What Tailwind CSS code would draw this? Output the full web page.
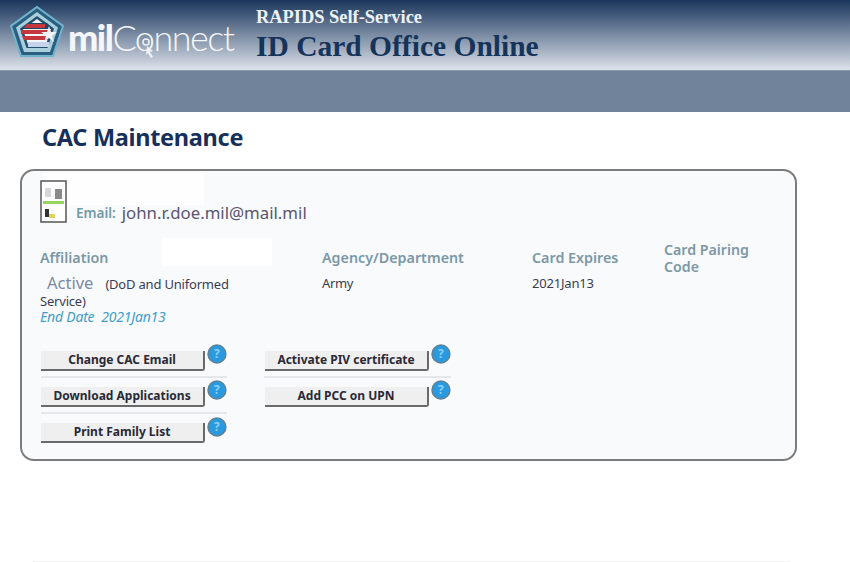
<!DOCTYPE html>
<html>
<head>
<meta charset="utf-8">
<script src="https://cdn.jsdelivr.net/npm/@tailwindcss/browser@4"></script>
</head>
<body class="bg-white font-['Noto_Sans',sans-serif] w-[850px] h-[562px] overflow-hidden relative">

<!-- banner -->
<header class="h-[70px] bg-gradient-to-b from-[#1b375c] via-[#7b8ca3] to-[#dde3ea] flex items-start">
  <svg class="w-[56px] h-[54px] ml-[9px] mt-[5px] shrink-0" viewBox="0 0 56 54">
    <polygon points="28,2 54,21 44,51 12,51 2,21" fill="#2b5f80" stroke="#6fb4cc" stroke-width="2"/>
    <polygon points="28,7 49,22.500 41,47 15,47 7,22.500" fill="#a9cfdd"/>
    <polygon points="28,11 45,23.500 38.500,43 17.500,43 11,23.500" fill="#24506f"/>
    <polygon points="28,14 42,24.500 36.500,41 19.500,41 14,24.500" fill="#f2f5fa"/>
    <path d="M20 18h18l5 6H13z" fill="#1f4565"/>
    <path d="M12 25h30v4H12z" fill="#c4373c"/>
    <path d="M18 19h18v4H15z" fill="#c4373c"/>
    <path d="M13 31h26v4H15z" fill="#c4373c"/>
    <path d="M19 37h21v5H19z" fill="#c5d4ea"/>
    <polygon points="40,21 42,27 48,27 43,31 45,37 40,33 35,37 37,31 32,27 38,27" fill="#eef3f8"/>
  </svg>
  <div class="relative ml-[3px] mt-[15px] w-[168px] text-[36px] leading-[44px] tracking-[-1.500px] text-[#f4f6f9] font-['Lato',sans-serif] whitespace-nowrap">
    <span class="font-black">mil</span><span class="font-light">Connect</span>
    <svg class="absolute left-[71px] top-[17px] w-[16px] h-[27px]" viewBox="0 0 16 27">
      <circle cx="7" cy="10" r="3" fill="none" stroke="#eef2f6" stroke-width="1.500"/>
      <path d="M8 14l6 5-3 1 3 5-2 1-3-5-2 2z" fill="#eef2f6"/>
    </svg>
  </div>
  <div class="ml-[20px] mt-[8px] font-['Liberation_Serif',serif] font-bold">
    <div class="text-[18.400px] leading-[19px] text-[#eef1f5]">RAPIDS Self-Service</div>
    <div class="mt-[2px] text-[29.500px] leading-[34px] text-[#16335a]">ID Card Office Online</div>
  </div>
</header>

<div class="h-[42px] bg-[#71839a] border-t border-[#8a98aa]"></div>

<main class="relative">
  <h1 class="ml-[42px] mt-[9px] text-[23.500px] leading-[33px] font-bold text-[#16305a] tracking-[-0.300px]">CAC Maintenance</h1>

  <section class="relative ml-[20px] mt-[15px] w-[777px] h-[292px] border-2 border-[#7c7c7c] rounded-[14px] bg-[#f9fafc] pl-[18px]">
    <!-- whited-out patches -->
    <div class="absolute left-[20px] top-[2px] w-[162px] h-[32px] bg-white/80"></div>
    <div class="absolute left-[140px] top-[67px] w-[110px] h-[28px] bg-white"></div>

    <div class="relative flex items-end h-[52px] pt-[9px]">
      <svg class="w-[27px] h-[43px] shrink-0" viewBox="0 0 27 43">
        <rect x="1" y="1" width="25" height="41" fill="#fff" stroke="#555" stroke-width="1.500"/>
        <rect x="5" y="8" width="6" height="9" fill="#d6d6dc"/>
        <rect x="15" y="9" width="7" height="10" fill="#8a8a8a"/>
        <rect x="3" y="21" width="21" height="3" fill="#9ad45c"/>
        <rect x="5" y="29" width="4" height="8" fill="#333"/>
        <rect x="9" y="34" width="6" height="4" fill="#e3d25a"/>
      </svg>
      <span class="ml-[9px] -translate-y-px text-[13.500px] leading-[18px] font-semibold text-[#6f9aa8]">Email:</span>
      <span class="ml-[6px] -translate-y-px text-[16.800px] leading-[18px] text-[#5a5570]">john.r.doe.mil@mail.mil</span>
    </div>

    <div class="relative grid grid-cols-[282px_210px_132px_1fr] mt-[18px]">
      <div>
        <div class="h-[34px] flex items-center text-[14.300px] font-semibold text-[#7b98a6]">Affiliation</div>
        <div class="-mt-px w-[205px] text-[13px] leading-[17px] tracking-[-0.200px] text-[#3c3c50]">
          <span class="ml-[7px] mr-[12px] text-[16.500px] leading-[17px] tracking-normal text-[#7a8aa8]">Active</span><span>(DoD and Uniformed</span><br><span>Service)</span>
        </div>
        <div class="text-[14px] leading-[13px] italic tracking-[-0.200px] text-[#3f9fc6]">End Date&nbsp; 2021Jan13</div>
      </div>
      <div>
        <div class="h-[34px] flex items-center text-[14.300px] font-semibold text-[#7b98a6]">Agency/Department</div>
        <div class="text-[13px] leading-[17px] tracking-[-0.400px] text-[#3c3c50]">Army</div>
      </div>
      <div>
        <div class="h-[34px] flex items-center text-[14.300px] font-semibold text-[#7b98a6]">Card Expires</div>
        <div class="text-[13px] leading-[17px] tracking-[-0.200px] text-[#3c3c50]">2021Jan13</div>
      </div>
      <div class="text-[14.200px] leading-[17px] font-semibold text-[#7b98a6] w-[100px]">Card Pairing Code</div>
    </div>

    <!-- action buttons -->
    <div class="relative flex mt-[19px] ml-[1px]">
      <div class="w-[186px] mr-[37px] flex flex-col">
        <div class="flex items-start h-[36px] border-b-2 border-[#e6e7ea]">
          <button class="mt-[9px] w-[165px] h-[20px] bg-[#efefef] border-b-2 border-r-2 border-[#6a6a6a] rounded-br-[3px] text-[12px] leading-[18px] font-bold text-[#2a2a36]">Change CAC Email</button>
          <svg class="ml-[2px] mt-[2px] w-[20px] h-[20px]" viewBox="0 0 20 20"><circle cx="10" cy="10" r="9" fill="#2a9ae0" stroke="#5f8296" stroke-width="1.500"/><text x="10" y="14.500" text-anchor="middle" font-size="12" font-weight="700" fill="#8fd0f5">?</text></svg>
        </div>
        <div class="flex items-start h-[36px] border-b-2 border-[#e6e7ea]">
          <button class="mt-[9px] w-[165px] h-[20px] bg-[#efefef] border-b-2 border-r-2 border-[#6a6a6a] rounded-br-[3px] text-[12px] leading-[18px] font-bold text-[#2a2a36]">Download Applications</button>
          <svg class="ml-[2px] mt-[2px] w-[20px] h-[20px]" viewBox="0 0 20 20"><circle cx="10" cy="10" r="9" fill="#2a9ae0" stroke="#5f8296" stroke-width="1.500"/><text x="10" y="14.500" text-anchor="middle" font-size="12" font-weight="700" fill="#8fd0f5">?</text></svg>
        </div>
        <div class="flex items-start h-[36px]">
          <button class="mt-[9px] w-[165px] h-[20px] bg-[#efefef] border-b-2 border-r-2 border-[#6a6a6a] rounded-br-[3px] text-[12px] leading-[18px] font-bold text-[#2a2a36]">Print Family List</button>
          <svg class="ml-[2px] mt-[3px] w-[20px] h-[20px]" viewBox="0 0 20 20"><circle cx="10" cy="10" r="9" fill="#2a9ae0" stroke="#5f8296" stroke-width="1.500"/><text x="10" y="14.500" text-anchor="middle" font-size="12" font-weight="700" fill="#8fd0f5">?</text></svg>
        </div>
      </div>
      <div class="w-[187px] flex flex-col">
        <div class="flex items-start h-[36px] border-b-2 border-[#e6e7ea]">
          <button class="ml-[1px] mt-[9px] w-[165px] h-[20px] bg-[#efefef] border-b-2 border-r-2 border-[#6a6a6a] rounded-br-[3px] text-[12px] leading-[18px] font-bold text-[#2a2a36]">Activate PIV certificate</button>
          <svg class="ml-[2px] mt-[2px] w-[20px] h-[20px]" viewBox="0 0 20 20"><circle cx="10" cy="10" r="9" fill="#2a9ae0" stroke="#5f8296" stroke-width="1.500"/><text x="10" y="14.500" text-anchor="middle" font-size="12" font-weight="700" fill="#8fd0f5">?</text></svg>
        </div>
        <div class="flex items-start h-[36px]">
          <button class="ml-[1px] mt-[9px] w-[165px] h-[20px] bg-[#efefef] border-b-2 border-r-2 border-[#6a6a6a] rounded-br-[3px] text-[12px] leading-[18px] font-bold text-[#2a2a36]">Add PCC on UPN</button>
          <svg class="ml-[2px] mt-[2px] w-[20px] h-[20px]" viewBox="0 0 20 20"><circle cx="10" cy="10" r="9" fill="#2a9ae0" stroke="#5f8296" stroke-width="1.500"/><text x="10" y="14.500" text-anchor="middle" font-size="12" font-weight="700" fill="#8fd0f5">?</text></svg>
        </div>
      </div>
    </div>
  </section>
</main>

<div class="absolute left-[33px] top-[561px] w-[757px] h-px bg-[#f2f2f2]"></div>
</body>
</html>
